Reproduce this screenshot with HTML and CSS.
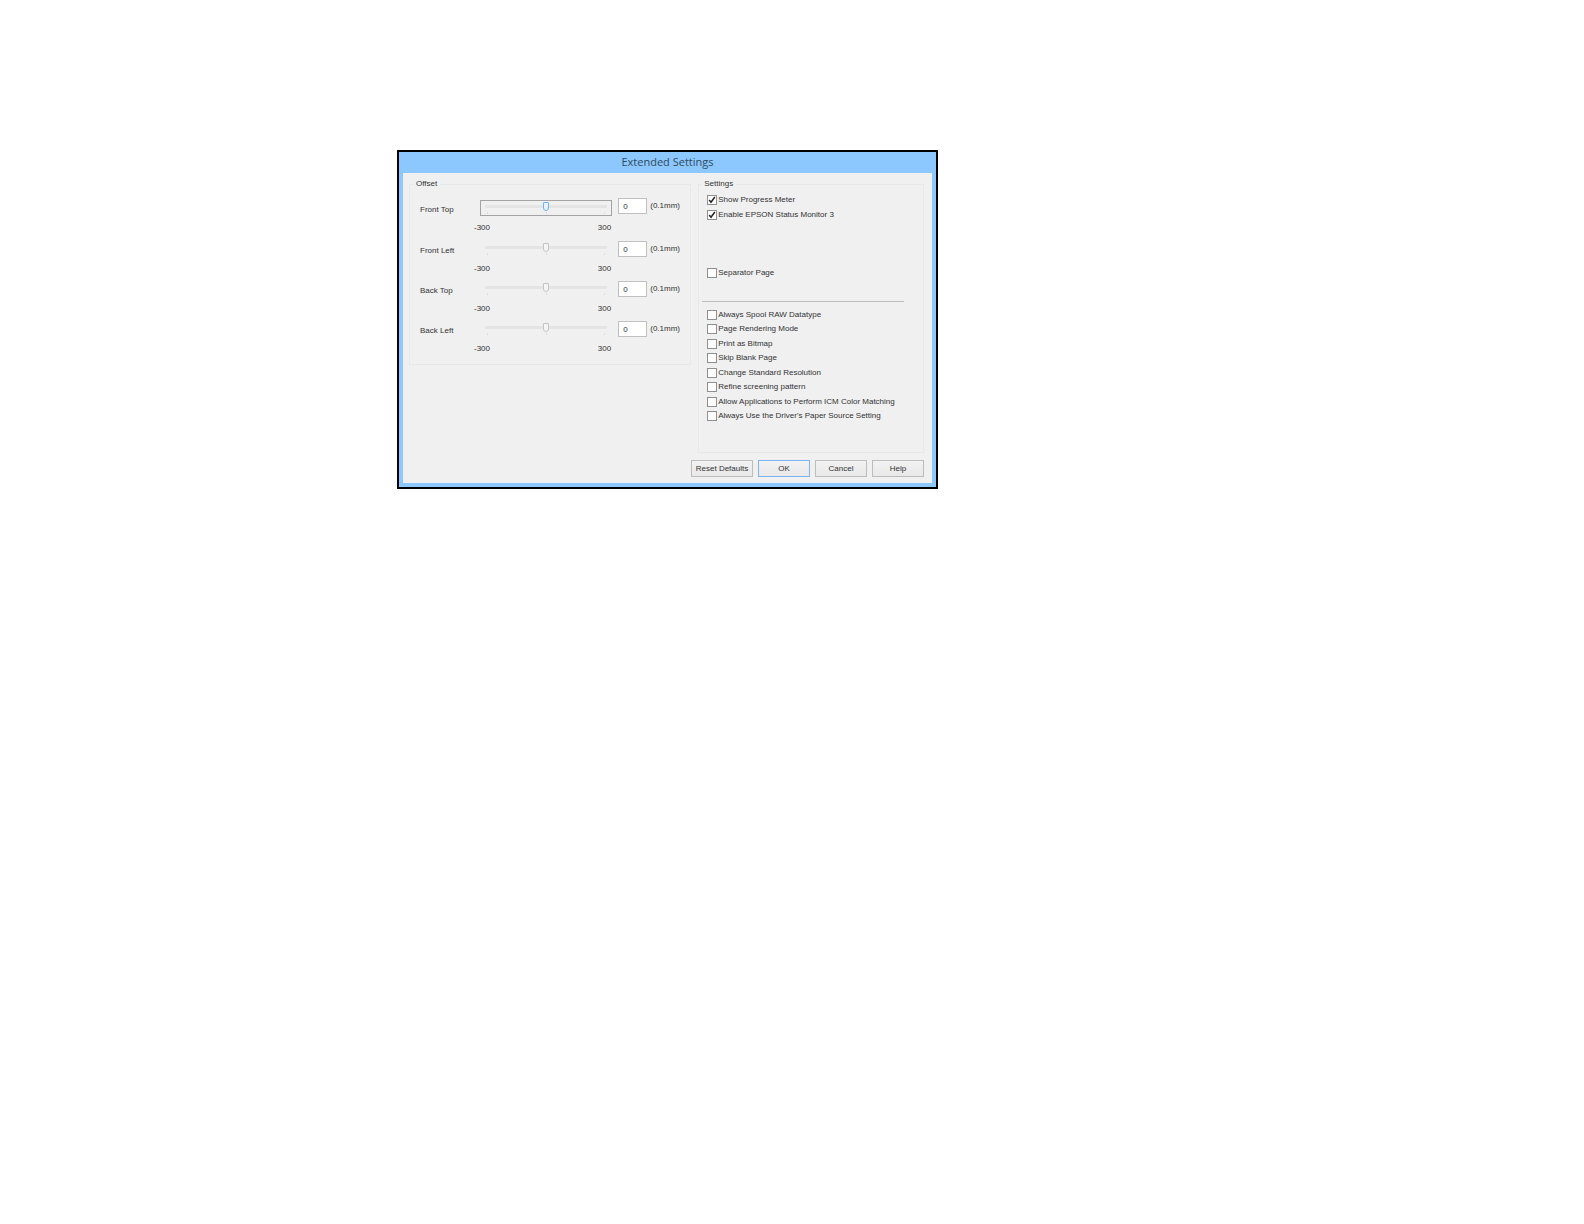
FILE: index.html
```html
<!DOCTYPE html>
<html lang="en">
<head>
    <meta charset="UTF-8"/>
    <meta name="viewport" content="width=device-width, initial-scale=1.0"/>
    <title>Extended Settings</title>
    <link rel="stylesheet" href="styles.css">
</head>
<body>
<div class="dialog" role="dialog" aria-labelledby="dialog-title">
    <h1 class="title" id="dialog-title">Extended Settings</h1>

    <form class="panel">
        <div class="groups">
            <!-- Offset -->
            <fieldset class="group offset">
                <legend>Offset</legend>

                <div class="row first">
                    <label class="name" for="front-top">Front Top</label>
                    <input class="slider active" id="front-top" type="range" min="-300" max="300" value="0">
                    <input class="value" type="text" value="0" aria-label="Front Top value">
                    <span class="unit">(0.1mm)</span>
                    <div class="scale"><span>-300</span><span>300</span></div>
                </div>

                <div class="row">
                    <label class="name" for="front-left">Front Left</label>
                    <input class="slider" id="front-left" type="range" min="-300" max="300" value="0">
                    <input class="value" type="text" value="0" aria-label="Front Left value">
                    <span class="unit">(0.1mm)</span>
                    <div class="scale"><span>-300</span><span>300</span></div>
                </div>

                <div class="row">
                    <label class="name" for="back-top">Back Top</label>
                    <input class="slider" id="back-top" type="range" min="-300" max="300" value="0">
                    <input class="value" type="text" value="0" aria-label="Back Top value">
                    <span class="unit">(0.1mm)</span>
                    <div class="scale"><span>-300</span><span>300</span></div>
                </div>

                <div class="row">
                    <label class="name" for="back-left">Back Left</label>
                    <input class="slider" id="back-left" type="range" min="-300" max="300" value="0">
                    <input class="value" type="text" value="0" aria-label="Back Left value">
                    <span class="unit">(0.1mm)</span>
                    <div class="scale"><span>-300</span><span>300</span></div>
                </div>
            </fieldset>

            <!-- Settings -->
            <fieldset class="group settings">
                <legend>Settings</legend>

                <div class="checks monitor">
                    <label class="check"><input type="checkbox" checked>Show Progress Meter</label>
                    <label class="check"><input type="checkbox" checked>Enable EPSON Status Monitor 3</label>
                </div>

                <div class="checks separator">
                    <label class="check"><input type="checkbox">Separator Page</label>
                </div>

                <hr class="line">

                <div class="checks options">
                    <label class="check"><input type="checkbox">Always Spool RAW Datatype</label>
                    <label class="check"><input type="checkbox">Page Rendering Mode</label>
                    <label class="check"><input type="checkbox">Print as Bitmap</label>
                    <label class="check"><input type="checkbox">Skip Blank Page</label>
                    <label class="check"><input type="checkbox">Change Standard Resolution</label>
                    <label class="check"><input type="checkbox">Refine screening pattern</label>
                    <label class="check"><input type="checkbox">Allow Applications to Perform ICM Color Matching</label>
                    <label class="check"><input type="checkbox">Always Use the Driver's Paper Source Setting</label>
                </div>
            </fieldset>
        </div>

        <!-- Buttons -->
        <div class="buttons">
            <button class="button wide" type="button">Reset Defaults</button>
            <button class="button default" type="button">OK</button>
            <button class="button" type="button">Cancel</button>
            <button class="button" type="button">Help</button>
        </div>
    </form>
</div>
</body>
</html>
```
FILE: styles.css
```css
* {
    box-sizing: border-box;
}

body {
    margin: 0 0 0 1px;
    padding: 150px 0 0 25%;
    background-color: #fff;
    color: #333;
    font-family: "Liberation Sans", Arial, sans-serif;
    font-size: 8px;
    line-height: 12px;
}

.dialog {
    width: 100%;
    max-width: 541px;
    border: 2px solid #000;
    background-color: #8cc8fd;
    padding: 0 4px 4px;
}

.title {
    margin: 0;
    padding-bottom: 2px;
    font-family: "Open Sans", "Noto Sans", sans-serif;
    font-size: 11px;
    font-weight: normal;
    line-height: 19px;
    text-align: center;
    color: #2f4a5f;
}

.panel {
    background-color: #f0f0f0;
    padding: 5px 8px 6px 6px;
}

.groups {
    display: grid;
    grid-template-columns: 5fr 4fr;
    gap: 7px;
    align-items: start;
}

.group {
    min-width: 0;
    margin: 0;
    border: 1px solid #e8e8e8;
}

.group legend {
    padding: 0 3px;
}

.offset {
    padding: 8px 13px 5px 10px;
}

.offset legend {
    margin-left: -7px;
}

.row {
    display: grid;
    grid-template-columns: 60px 1fr 29px 30px;
    grid-template-rows: 18px 12px;
    row-gap: 6px;
    padding-bottom: 4px;
    align-items: end;
}

.row.first {
    padding-bottom: 5px;
}

/* track with end and middle ticks */
.slider {
    appearance: none;
    width: auto;
    min-width: 0;
    height: 16px;
    margin: 0 6px 0 0;
    padding: 0 4px;
    border: 1px solid transparent;
    background: transparent;
}

.slider.active {
    border: 1px solid #a3a3a3;
}

.slider::-webkit-slider-runnable-track {
    height: 14px;
    background:
        linear-gradient(#e4e4e4, #e4e4e4) 50% 4px / 100% 3px no-repeat,
        linear-gradient(#dcdcdc, #dcdcdc) 2px 11px / 1px 2px no-repeat,
        linear-gradient(#dcdcdc, #dcdcdc) 50% 11px / 1px 2px no-repeat,
        linear-gradient(#dcdcdc, #dcdcdc) calc(100% - 2px) 11px / 1px 2px no-repeat;
}

.slider::-webkit-slider-thumb {
    appearance: none;
    width: 6px;
    height: 9px;
    margin-top: 1px;
    border: 1px solid #c4c4c4;
    border-radius: 1px 1px 3px 3px;
    background-color: #f4f4f4;
}

.slider.active::-webkit-slider-thumb {
    border-color: #6fb0f5;
    background-color: #e6f2fe;
}

.value {
    width: 100%;
    height: 16px;
    padding: 0 0 0 4px;
    border: 1px solid #c0c0c0;
    background-color: #fff;
    color: inherit;
    font: inherit;
}

.unit {
    padding-left: 3px;
    line-height: 16px;
    white-space: nowrap;
}

.first .value,
.first .unit {
    align-self: start;
}

.scale {
    grid-column: 2;
    display: flex;
    justify-content: space-between;
    margin: 0 7px 0 -6px;
}

/* right column */
.settings {
    padding: 4px 19px 30px 3px;
}

.settings legend {
    margin-left: -1px;
}

.checks {
    display: flex;
    flex-direction: column;
    justify-content: space-between;
    padding-left: 5px;
}

.monitor {
    height: 27px;
    margin-bottom: 46px;
}

.line {
    height: 1px;
    margin: 22px 0 7px;
    border: 0;
    background-color: #bdbdbd;
}

.options {
    height: 113px;
}

.check {
    display: flex;
    align-items: center;
    gap: 1px;
    height: 12px;
    white-space: nowrap;
}

.check input {
    appearance: none;
    width: 10px;
    height: 10px;
    margin: 0;
    border: 1px solid #8f8f8f;
    background-color: #fff;
}

.check input:checked {
    background-image: url("data:image/svg+xml,%3Csvg xmlns='http://www.w3.org/2000/svg' viewBox='0 0 8 8'%3E%3Cpath d='M1.2 4 3 6.2 6.8 1' fill='none' stroke='%23222' stroke-width='1.5'/%3E%3C/svg%3E");
}

.buttons {
    display: flex;
    justify-content: flex-end;
    gap: 5px;
    margin-top: 7px;
}

.button {
    width: 52px;
    height: 17px;
    padding: 0;
    border: 1px solid #bdbdbd;
    background: linear-gradient(#f2f2f2, #e8e8e8);
    color: inherit;
    font: inherit;
    white-space: nowrap;
}

.button.wide {
    width: 62px;
}

.button.default {
    border-color: #7db4ee;
}
```
